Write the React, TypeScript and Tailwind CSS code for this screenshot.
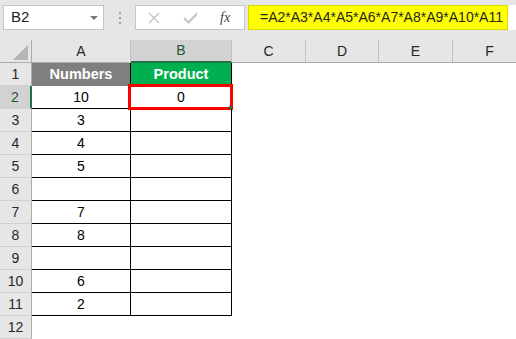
import React from "react";

const font = "font-['Liberation_Sans','Arial',sans-serif]";

const colHeaders: { label: string; w: string; selected?: boolean }[] = [
  { label: "A", w: "w-[99px]" },
  { label: "B", w: "w-[101px]", selected: true },
  { label: "C", w: "w-[74px]" },
  { label: "D", w: "w-[73px]" },
  { label: "E", w: "w-[74px]" },
  { label: "F", w: "w-[74px]" },
];

const data: (string | null)[] = [null, "10", "3", "4", "5", "", "7", "8", "", "6", "2"];

export default function App() {
  return (
    <div className={`w-[516px] h-[339px] overflow-hidden bg-white ${font}`}>
      {/* Formula bar */}
      <div className="h-[40px] bg-[#e6e6e6] flex items-start pt-[5px] pl-[3px]">
        <div className="w-[101px] h-[25px] bg-white border border-[#c6c6c6] flex items-center justify-between pl-[7px] pr-[5px]">
          <span className="text-[15px] text-[#222]">B2</span>
          <svg width="8" height="4" viewBox="0 0 8 4">
            <polygon points="0,0 8,0 4,4" fill="#777" />
          </svg>
        </div>
        <div className="ml-[15px] mt-[7px] flex flex-col gap-[3px]">
          <div className="w-[2px] h-[2px] bg-[#a0a0a0]" />
          <div className="w-[2px] h-[2px] bg-[#a0a0a0]" />
          <div className="w-[2px] h-[2px] bg-[#a0a0a0]" />
        </div>
        <div className="ml-[14px] w-[110px] h-[25px] bg-white border border-[#c6c6c6] flex items-center pl-[12px]">
          <svg width="12" height="12" viewBox="0 0 12 12">
            <path d="M1 1 L11 11 M11 1 L1 11" stroke="#c4c4c4" strokeWidth="1.4" fill="none" />
          </svg>
          <svg className="ml-[23px]" width="15" height="12" viewBox="0 0 15 12">
            <path d="M1 6 L5.5 10.5 L14 1.5" stroke="#c4c4c4" strokeWidth="2" fill="none" />
          </svg>
          <span className="ml-[22px] text-[14px] italic font-['Liberation_Serif',serif] text-[#444] leading-none">
            fx
          </span>
        </div>
        <div className="ml-[3px] w-[260px] h-[25px] bg-[#ffff00] border border-[#dada00] flex items-center pl-[11px]">
          <span className="text-[14px] text-[#262626] whitespace-nowrap">=A2*A3*A4*A5*A6*A7*A8*A9*A10*A11</span>
        </div>
        <div className="flex-1 h-[25px] bg-white" />
      </div>

      {/* Column headers */}
      <div className="flex h-[23px] bg-[#e6e6e6]">
        <div className="w-[32px] shrink-0 border-r border-b border-[#ababab] flex items-end justify-end pr-[3px] pb-[2px]">
          <svg width="15" height="15" viewBox="0 0 15 15">
            <polygon points="15,0 15,15 0,15" fill="#b4b4b4" />
          </svg>
        </div>
        {colHeaders.map((c) => (
          <div
            key={c.label}
            className={`${c.w} shrink-0 border-r border-[#c0c0c0] flex items-center justify-center text-[14px] ${
              c.selected
                ? "bg-[#d2d2d2] border-b-2 border-b-[#217346] text-[#1d5a36]"
                : "border-b border-b-[#ababab] text-[#262626]"
            }`}
          >
            {c.label}
          </div>
        ))}
      </div>

      {/* Rows */}
      {Array.from({ length: 12 }, (_, i) => i + 1).map((r) => {
        const inTable = r <= 11;
        const sel = r === 2;
        return (
          <div key={r} className="flex h-[23px]">
            <div
              className={`w-[32px] shrink-0 border-b border-b-[#d0d0d0] flex items-center justify-center text-[14px] ${
                sel
                  ? "bg-[#d2d2d2] border-r-2 border-r-[#217346] text-[#1d5a36]"
                  : "bg-[#e6e6e6] border-r border-r-[#ababab] text-[#262626]"
              }`}
            >
              {r}
            </div>
            {r === 1 ? (
              <>
                <div className="w-[99px] shrink-0 bg-[#7f7f7f] border-r border-black flex items-center justify-center text-white font-bold text-[14.5px]">
                  Numbers
                </div>
                <div className="w-[101px] shrink-0 bg-[#00b050] border-r border-black flex items-center justify-center text-white font-bold text-[14.5px]">
                  Product
                </div>
              </>
            ) : inTable ? (
              <>
                <div className="w-[99px] shrink-0 border-r border-b border-black flex items-center justify-center text-[14px] text-black">
                  {data[r - 1]}
                </div>
                <div className="relative w-[101px] shrink-0 border-r border-b border-black flex items-center justify-center text-[14px] text-black">
                  {sel ? "0" : ""}
                  {sel && (
                    <>
                      <div className="absolute -left-[3px] -top-[2px] -right-[2px] -bottom-[2px] border-[3px] border-[#ff0000]" />
                      <div className="absolute -right-[1px] -bottom-[1px] w-[3px] h-[3px] bg-[#217346]" />
                    </>
                  )}
                </div>
              </>
            ) : (
              <div className="w-[200px] shrink-0" />
            )}
            <div className="flex-1 bg-white" />
          </div>
        );
      })}
    </div>
  );
}
